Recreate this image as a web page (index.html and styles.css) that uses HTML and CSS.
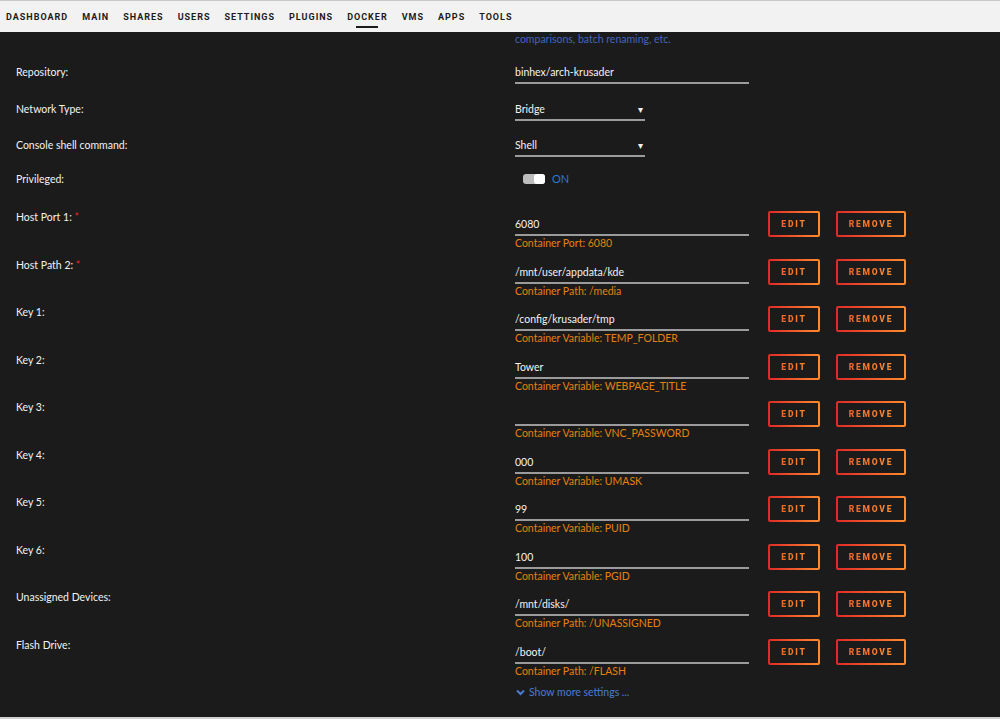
FILE: index.html
```html
<!DOCTYPE html>
<html lang="en">
<head>
  <meta charset="UTF-8" />
  <title>Docker - Update Container</title>
  <link rel="stylesheet" href="styles.css">
</head>
<body>
  <nav class="menu">
    <a href="#">Dashboard</a>
    <a href="#">Main</a>
    <a href="#">Shares</a>
    <a href="#">Users</a>
    <a href="#">Settings</a>
    <a href="#">Plugins</a>
    <a href="#" class="active">Docker</a>
    <a href="#">VMs</a>
    <a href="#">Apps</a>
    <a href="#">Tools</a>
  </nav>

  <main class="content">
    <div class="overview">comparisons, batch renaming, etc.</div>

    <div class="row row-repo">
      <div class="label">Repository:</div>
      <div class="value"><div class="field wide">binhex/arch-krusader</div></div>
    </div>
    <div class="row row-net">
      <div class="label">Network Type:</div>
      <div class="value"><div class="field select">Bridge</div></div>
    </div>
    <div class="row row-shell">
      <div class="label">Console shell command:</div>
      <div class="value"><div class="field select">Shell</div></div>
    </div>
    <div class="row row-priv">
      <div class="label">Privileged:</div>
      <div class="value">
        <div class="switch"><span class="track"><span class="knob"></span></span><span class="on">ON</span></div>
      </div>
    </div>

    <div class="config">
      <div class="label">Host Port 1: <span class="req">*</span></div>
      <div class="value"><div class="field">6080</div><div class="hint">Container Port: 6080</div></div>
      <div class="actions"><button class="btn edit"><span>Edit</span></button><button class="btn remove"><span>Remove</span></button></div>
    </div>
    <div class="config">
      <div class="label">Host Path 2: <span class="req">*</span></div>
      <div class="value"><div class="field">/mnt/user/appdata/kde</div><div class="hint">Container Path: /media</div></div>
      <div class="actions"><button class="btn edit"><span>Edit</span></button><button class="btn remove"><span>Remove</span></button></div>
    </div>
    <div class="config">
      <div class="label">Key 1:</div>
      <div class="value"><div class="field">/config/krusader/tmp</div><div class="hint">Container Variable: TEMP_FOLDER</div></div>
      <div class="actions"><button class="btn edit"><span>Edit</span></button><button class="btn remove"><span>Remove</span></button></div>
    </div>
    <div class="config">
      <div class="label">Key 2:</div>
      <div class="value"><div class="field">Tower</div><div class="hint">Container Variable: WEBPAGE_TITLE</div></div>
      <div class="actions"><button class="btn edit"><span>Edit</span></button><button class="btn remove"><span>Remove</span></button></div>
    </div>
    <div class="config">
      <div class="label">Key 3:</div>
      <div class="value"><div class="field">&nbsp;</div><div class="hint">Container Variable: VNC_PASSWORD</div></div>
      <div class="actions"><button class="btn edit"><span>Edit</span></button><button class="btn remove"><span>Remove</span></button></div>
    </div>
    <div class="config">
      <div class="label">Key 4:</div>
      <div class="value"><div class="field">000</div><div class="hint">Container Variable: UMASK</div></div>
      <div class="actions"><button class="btn edit"><span>Edit</span></button><button class="btn remove"><span>Remove</span></button></div>
    </div>
    <div class="config">
      <div class="label">Key 5:</div>
      <div class="value"><div class="field">99</div><div class="hint">Container Variable: PUID</div></div>
      <div class="actions"><button class="btn edit"><span>Edit</span></button><button class="btn remove"><span>Remove</span></button></div>
    </div>
    <div class="config">
      <div class="label">Key 6:</div>
      <div class="value"><div class="field">100</div><div class="hint">Container Variable: PGID</div></div>
      <div class="actions"><button class="btn edit"><span>Edit</span></button><button class="btn remove"><span>Remove</span></button></div>
    </div>
    <div class="config">
      <div class="label">Unassigned Devices:</div>
      <div class="value"><div class="field">/mnt/disks/</div><div class="hint">Container Path: /UNASSIGNED</div></div>
      <div class="actions"><button class="btn edit"><span>Edit</span></button><button class="btn remove"><span>Remove</span></button></div>
    </div>
    <div class="config">
      <div class="label">Flash Drive:</div>
      <div class="value"><div class="field">/boot/</div><div class="hint">Container Path: /FLASH</div></div>
      <div class="actions"><button class="btn edit"><span>Edit</span></button><button class="btn remove"><span>Remove</span></button></div>
    </div>

    <div class="more">
      <svg width="9" height="7" viewBox="0 0 9 7"><path d="M1 1.5 L4.5 5 L8 1.5" fill="none" stroke="#4a7bd4" stroke-width="2"/></svg>
      <span>Show more settings ...</span>
    </div>
  </main>
  <footer class="bottom"></footer>
</body>
</html>
```

FILE: styles.css
```css
:root {
  --bg: #1c1b1b;
  --text: #f2f2f2;
  --line: #9b9b9b;
  --hint: #e2820e;
  --blue: #4a7bd4;
  --font: 'Lato', 'Open Sans', sans-serif;
}

html, body {
  margin: 0;
  padding: 0;
  height: 100%;
  overflow: hidden;
  background: var(--bg);
  font-family: var(--font);
  color: var(--text);
}

.menu {
  display: flex;
  align-items: center;
  height: 31px;
  border-top: 1px solid #c8c8c8;
  background: #f2f2f2;
  padding-left: 6px;
}

.menu a {
  position: relative;
  margin-right: 14px;
  font-family: 'Roboto', sans-serif;
  font-size: 9px;
  font-weight: 700;
  letter-spacing: 1px;
  text-transform: uppercase;
  text-decoration: none;
  color: #1c1b1b;
}

.menu a.active::after {
  content: '';
  position: absolute;
  left: 50%;
  bottom: -6px;
  width: 22px;
  height: 2px;
  margin-left: -11px;
  background: #1c1b1b;
}

.content {
  height: 685px;
  overflow: hidden;
  font-size: 10.5px;
  line-height: 14px;
}

.overview {
  margin-left: 515px;
  color: #4466b8;
  height: 33px;
}

.row {
  display: grid;
  grid-template-columns: 499px 1fr;
  padding-left: 16px;
}

.row-repo { height: 37px; }
.row-net { height: 36px; }
.row-shell { height: 34px; }
.row-priv { height: 38px; }

.field {
  width: 234px;
  padding-bottom: 3px;
  border-bottom: 2px solid var(--line);
  white-space: nowrap;
}

.field.wide { width: 234px; }

.field.select {
  position: relative;
  width: 130px;
}

.field.select::after {
  content: '\25BE';
  position: absolute;
  right: 2px;
  top: 0;
  font-size: 10px;
}

.switch {
  display: flex;
  align-items: center;
  gap: 7px;
  padding-left: 8px;
}

.track {
  display: flex;
  justify-content: flex-end;
  width: 22px;
  height: 10px;
  border-radius: 3px;
  background: #bdbdbd;
}

.knob {
  width: 11px;
  height: 10px;
  border-radius: 3px;
  background: #fff;
}

.on {
  color: #2a78cf;
  font-size: 11px;
}

.config {
  display: grid;
  grid-template-columns: 499px 253px auto;
  height: 47.5px;
  padding-left: 16px;
}

.config .field {
  margin-top: 7px;
}

.req {
  color: #e22828;
}

.hint {
  color: var(--hint);
}

.actions {
  display: flex;
  gap: 16px;
  padding-top: 1px;
  align-items: flex-start;
}

.btn {
  height: 26px;
  padding: 0;
  border: 2px solid transparent;
  border-radius: 2px;
  background: linear-gradient(var(--bg), var(--bg)) padding-box,
              linear-gradient(90deg, #e22828, #ff8c2f) border-box;
  font-family: 'Roboto', sans-serif;
  font-size: 8.5px;
  font-weight: 900;
  letter-spacing: 1.8px;
  text-transform: uppercase;
  cursor: pointer;
}

.btn span {
  background: linear-gradient(90deg, #f0642a, #ff8c2f);
  -webkit-background-clip: text;
  background-clip: text;
  color: transparent;
}

.btn.edit { width: 52px; }
.btn.remove { width: 70px; }

.more {
  display: flex;
  align-items: center;
  gap: 4px;
  margin-left: 516px;
  color: var(--blue);
}

.bottom {
  height: 2px;
  background: #cfcfcf;
}
```
